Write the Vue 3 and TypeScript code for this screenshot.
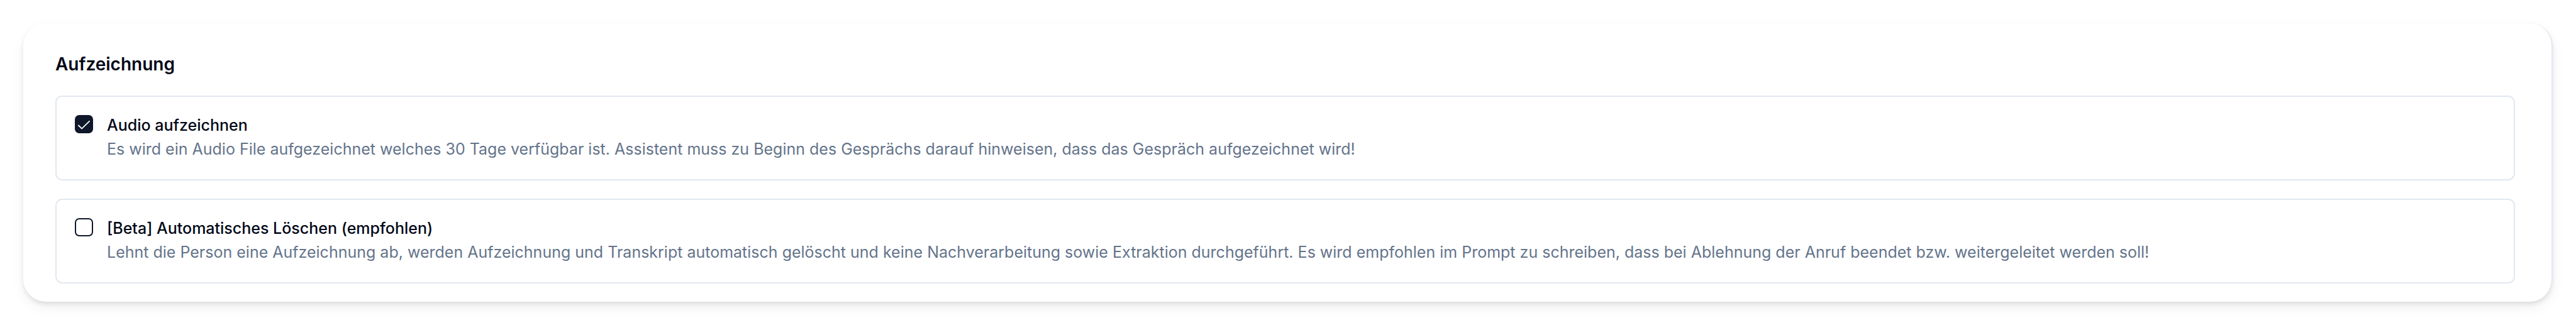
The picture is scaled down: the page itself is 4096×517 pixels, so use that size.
<script setup lang="ts">
import { ref } from 'vue'

interface RecordingOption {
  id: string
  title: string
  description: string
  enabled: boolean
}

const options = ref<RecordingOption[]>([
  {
    id: 'record-audio',
    title: 'Audio aufzeichnen',
    description:
      'Es wird ein Audio File aufgezeichnet welches 30 Tage verfügbar ist. Assistent muss zu Beginn des Gesprächs darauf hinweisen, dass das Gespräch aufgezeichnet wird!',
    enabled: true,
  },
  {
    id: 'auto-delete',
    title: '[Beta] Automatisches Löschen (empfohlen)',
    description:
      'Lehnt die Person eine Aufzeichnung ab, werden Aufzeichnung und Transkript automatisch gelöscht und keine Nachverarbeitung sowie Extraktion durchgeführt. Es wird empfohlen im Prompt zu schreiben, dass bei Ablehnung der Anruf beendet bzw. weitergeleitet werden soll!',
    enabled: false,
  },
])
</script>

<template>
  <main class="page">
    <section class="card" aria-labelledby="recording-heading">
      <h2 id="recording-heading" class="heading">Aufzeichnung</h2>
      <div class="options">
        <div v-for="option in options" :key="option.id" class="option">
          <span class="check">
            <input
              :id="option.id"
              v-model="option.enabled"
              class="box"
              type="checkbox"
              :aria-describedby="option.id + '-description'"
            />
            <svg v-if="option.enabled" class="tick" viewBox="0 0 32 32" aria-hidden="true">
              <path d="M6.5 18.2 12.2 23.8 25.5 10.8" />
            </svg>
          </span>
          <div class="copy">
            <label class="title" :for="option.id">{{ option.title }}</label>
            <p :id="option.id + '-description'" class="description">{{ option.description }}</p>
          </div>
        </div>
      </div>
    </section>
  </main>
</template>

<style scoped>
.page {
  padding: 37px;
  font-family: Inter, 'Liberation Sans', sans-serif;
  color: #020817;
}

.card {
  padding: 44px 58px 29px 51px;
  border-right: 2px solid #e2e8f0;
  border-radius: 36px;
  background: #fff;
  box-shadow:
    0 9px 22px -2px rgb(0 0 0 / 0.07),
    0 4px 8px -2px rgb(0 0 0 / 0.12);
}

.heading {
  margin: 0 0 29px;
  font-size: 28px;
  font-weight: 600;
  line-height: 42px;
}

.options {
  display: flex;
  flex-direction: column;
  gap: 29px;
}

.option {
  display: flex;
  align-items: flex-start;
  gap: 22px;
  padding: 29px;
  border: 2px solid #e2e8f0;
  border-radius: 11px;
}

.check {
  position: relative;
  flex: none;
  width: 29px;
  height: 29px;
}

.box {
  display: block;
  box-sizing: border-box;
  width: 100%;
  height: 100%;
  margin: 0;
  border: 2px solid #0f172a;
  border-radius: 7px;
  appearance: none;
  background: #fff;
}

.box:checked {
  background: #0f172a;
}

.tick {
  position: absolute;
  inset: 0;
  fill: none;
  stroke: #f8fafc;
  stroke-width: 2;
  stroke-linecap: round;
  stroke-linejoin: round;
  pointer-events: none;
}

.copy {
  display: flex;
  flex: 1;
  flex-direction: column;
  align-items: flex-start;
  gap: 2px;
  min-width: 0;
}

.title {
  font-size: 25px;
  font-weight: 500;
  line-height: 33px;
}

.description {
  margin: 0;
  color: #64748b;
  font-size: 25px;
  line-height: 38px;
}
</style>
